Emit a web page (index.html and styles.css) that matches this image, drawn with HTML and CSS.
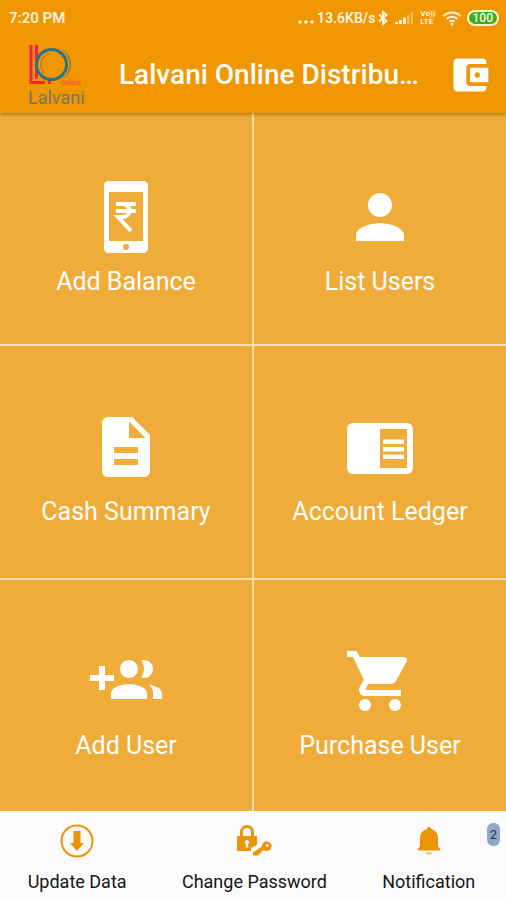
FILE: index.html
```html
<!DOCTYPE html>
<html lang="en">
<head>
<meta charset="utf-8">
<meta name="viewport" content="width=device-width, initial-scale=1">
<title>Lalvani Online Distributor</title>
<link rel="stylesheet" href="styles.css">
</head>
<body>
<div class="app">
  <header class="header">
    <div class="status">
      <span class="status-time">7:20 PM</span>
      <div class="status-info">
        <svg class="dots" viewBox="0 0 16 16" aria-hidden="true"><circle cx="2" cy="12" r="1.8"/><circle cx="8" cy="12" r="1.8"/><circle cx="14" cy="12" r="1.8"/></svg>
        <span>13.6KB/s</span>
        <svg class="bluetooth" viewBox="0 0 10 16" aria-hidden="true"><path d="M1 4.500l7.500 6.500L5 14V2l3.500 3L1 11.500"/></svg>
        <svg class="signal" viewBox="0 0 20 16" aria-hidden="true"><path d="M1 12h3v2H1zM5 10h3v4H5zM9 7.500h3V14H9z"/><path class="faint" d="M13 5h2.500v9H13zM17 2h2v12h-2z"/></svg>
        <span class="volte"><span>Vo))</span><span>LTE</span></span>
        <svg class="wifi" viewBox="0 0 20 16" aria-hidden="true"><path d="M1.500 6a12 12 0 0 1 17 0M4.500 9a7.800 7.800 0 0 1 11 0M7.300 11.800a3.900 3.900 0 0 1 5.400 0"/><circle cx="10" cy="14" r="1.500"/></svg>
        <span class="battery">100</span>
      </div>
    </div>
    <div class="bar">
      <svg class="logo" viewBox="0 0 60 62" role="img" aria-label="Lalvani Online">
        <path class="logo-red" d="M3 1v37.500h14M8.500 1v34M21.500 36v4"/>
        <circle class="logo-blue" cx="23.500" cy="20.500" r="15"/>
        <path class="logo-ring" d="M22 9.500a11.500 11.500 0 0 0-6 19M35 6a18 18 0 0 1 0 29M38 9a17 17 0 0 1 1 21"/>
        <text class="logo-small" x="33" y="41">Online</text>
        <text class="logo-name" x="0" y="60">Lalvani</text>
      </svg>
      <h1 class="title">Lalvani Online Distributor</h1>
      <button class="wallet" type="button" aria-label="Wallet">
        <svg viewBox="0 0 24 24" aria-hidden="true"><path d="M21 18v1c0 1.100-.9 2-2 2H5c-1.110 0-2-.9-2-2V5c0-1.100.89-2 2-2h14c1.100 0 2 .9 2 2v1h-9c-1.110 0-2 .9-2 2v8c0 1.100.89 2 2 2h9zm-9-2h10V8H12v8zm4-2.500c-.83 0-1.500-.67-1.500-1.500s.67-1.500 1.500-1.500 1.500.67 1.500 1.500-.67 1.500-1.500 1.500z"/></svg>
      </button>
    </div>
  </header>

  <main class="grid">
    <a class="tile" href="#balance">
      <svg viewBox="0 0 72 72" aria-hidden="true"><path fill-rule="evenodd" d="M19 0h34q5 0 5 5v62q0 5-5 5H19q-5 0-5-5V5q0-5 5-5zM19 11v49h34V11zM36 63a3 3 0 1 0 0 6 3 3 0 0 0 0-6z"/><path class="rupee" d="M26 23h20M26 30h20M26 23h6c10 0 10 13 0 13h-4l13 14"/></svg>
      <span>Add Balance</span>
    </a>
    <a class="tile" href="#users">
      <svg viewBox="0 0 24 24" aria-hidden="true"><path d="M12 12c2.210 0 4-1.790 4-4s-1.790-4-4-4-4 1.790-4 4 1.790 4 4 4zm0 2c-2.670 0-8 1.340-8 4v2h16v-2c0-2.660-5.330-4-8-4z"/></svg>
      <span>List Users</span>
    </a>
    <a class="tile" href="#cash">
      <svg viewBox="0 0 24 24" aria-hidden="true"><path d="M14 2H6c-1.100 0-1.990.9-1.990 2L4 20c0 1.100.89 2 1.990 2H18c1.100 0 2-.9 2-2V8l-6-6zm2 16H8v-2h8v2zm0-4H8v-2h8v2zm-3-5V3.500L18.500 9H13z"/></svg>
      <span>Cash Summary</span>
    </a>
    <a class="tile" href="#ledger">
      <svg viewBox="0 0 24 24" aria-hidden="true"><path d="M13 12h7v1.500h-7zm0-2.500h7V11h-7zm0 5h7V16h-7zM21 4H3c-1.100 0-2 .9-2 2v13c0 1.100.9 2 2 2h18c1.100 0 2-.9 2-2V6c0-1.100-.9-2-2-2zm0 15h-9V6h9v13z"/></svg>
      <span>Account Ledger</span>
    </a>
    <a class="tile" href="#add-user">
      <svg viewBox="0 0 24 24" aria-hidden="true"><path d="M8 10H5V7H3v3H0v2h3v3h2v-3h3v-2zm10 1c1.660 0 2.990-1.340 2.990-3S19.660 5 18 5c-.32 0-.63.05-.91.14.57.81.9 1.790.9 2.860s-.34 2.040-.9 2.860c.28.09.59.14.91.14zm-5 0c1.660 0 2.990-1.340 2.990-3S14.660 5 13 5s-3 1.340-3 3 1.340 3 3 3zm6.620 2.160c.83.73 1.380 1.660 1.380 2.840v2h3v-2c0-1.540-2.370-2.490-4.380-2.840zM13 13c-2 0-6 1-6 3v2h12v-2c0-2-4-3-6-3z"/></svg>
      <span>Add User</span>
    </a>
    <a class="tile" href="#purchase">
      <svg viewBox="0 0 24 24" aria-hidden="true"><path d="M7 18c-1.100 0-1.990.9-1.990 2S5.900 22 7 22s2-.9 2-2-.9-2-2-2zM1 2v2h2l3.600 7.590-1.350 2.450c-.16.28-.25.61-.25.96 0 1.100.9 2 2 2h12v-2H7.420c-.14 0-.25-.11-.25-.25l.03-.12.9-1.630h7.450c.75 0 1.410-.41 1.750-1.030l3.580-6.490c.08-.14.12-.31.12-.48 0-.55-.45-1-1-1H5.210l-.94-2H1zm16 16c-1.100 0-1.990.9-1.990 2s.89 2 1.990 2 2-.9 2-2-.9-2-2-2z"/></svg>
      <span>Purchase User</span>
    </a>
  </main>

  <nav class="nav">
    <a class="nav-item" href="#update">
      <svg viewBox="0 0 36 36" aria-hidden="true"><circle class="ring" cx="18" cy="18" r="15.500"/><path d="M14.500 8h7v12H25l-7 8-7-8h3.500z"/></svg>
      <span>Update Data</span>
    </a>
    <a class="nav-item" href="#password">
      <svg viewBox="0 0 36 36" aria-hidden="true"><path fill-rule="evenodd" d="M1 13h3V9a7 7 0 0 1 14 0v4h3v9l-6 3v3H1zM7 13h8V9a4 4 0 0 0-8 0zM11 17a2.200 2.200 0 0 0-1.200 4v3.500h2.400V21a2.200 2.200 0 0 0-1.200-4z"/><path fill-rule="evenodd" d="M26 23.500a4.800 4.800 0 1 1 3.500 4.300l-2.500-.3-2 1.500.3 1.500-2.300.3-.5 1.700H17v-3zM31.300 21.200a1.400 1.400 0 1 0 0 2.800 1.400 1.400 0 0 0 0-2.800z"/></svg>
      <span>Change Password</span>
    </a>
    <a class="nav-item" href="#notification">
      <svg viewBox="0 0 36 36" aria-hidden="true"><path d="M18 4c1.500 0 2 1 2 2 5 1.500 7 5 7 10v7l2 3v1.500H7V26l2-3v-7c0-5 2-8.500 7-10 0-1 .5-2 2-2z"/><path class="clapper" d="M15 29h6a3 3 0 0 1-6 0z"/></svg>
      <span>Notification</span>
    </a>
    <span class="badge">2</span>
  </nav>
</div>
</body>
</html>
```

FILE: styles.css
```css
* {
  box-sizing: border-box;
}

body {
  margin: 0;
  font-family: Roboto, "Liberation Sans", sans-serif;
  color: #fff;
  background: #fbfbfb;
}

a {
  color: inherit;
  text-decoration: none;
}

svg {
  display: block;
  flex: none;
  fill: currentColor;
}

.app {
  display: flex;
  flex-direction: column;
  min-height: 100vh;
}

.header {
  position: relative;
  background: #ef9600;
  box-shadow: 0 1px 4px rgba(90, 60, 0, 0.6);
}

.status {
  display: flex;
  align-items: center;
  justify-content: space-between;
  height: 36px;
  padding: 0 7px 0 9px;
  font-size: 14px;
  font-weight: 600;
  color: #fff4dc;
}

.status-time {
  font-size: 15px;
}

.status-info {
  display: flex;
  align-items: center;
  gap: 3px;
}

.dots {
  width: 16px;
  height: 16px;
}

.bluetooth {
  width: 10px;
  height: 16px;
  fill: none;
  stroke: currentColor;
  stroke-width: 2;
}

.signal {
  width: 20px;
  height: 16px;
  margin-left: 3px;
}

.faint {
  opacity: 0.4;
}

.volte {
  display: flex;
  flex-direction: column;
  margin: 0 3px;
  font-size: 8px;
  line-height: 8px;
  font-weight: 700;
}

.wifi {
  width: 20px;
  height: 16px;
}

.wifi path {
  fill: none;
  stroke: currentColor;
  stroke-width: 2;
}

.battery {
  margin-left: 2px;
  padding: 0 4px;
  border: 2px solid #fff0d0;
  border-radius: 8px;
  background: #38b020;
  font-size: 12px;
  line-height: 12px;
  font-weight: 500;
}

.bar {
  display: flex;
  align-items: center;
  height: 77px;
  padding: 0 14px 0 28px;
}

.logo {
  width: 60px;
  height: 62px;
}

.logo-red,
.logo-blue,
.logo-ring {
  fill: none;
}

.logo-red {
  stroke: #f5204f;
  stroke-width: 3;
}

.logo-blue {
  stroke: #287585;
  stroke-width: 3;
}

.logo-ring {
  stroke: #887a4d;
  stroke-width: 1;
}

.logo-small {
  fill: #fa5a3c;
  font-size: 7px;
  font-weight: 700;
}

.logo-name {
  fill: #75766a;
  font-size: 18px;
}

.title {
  flex: 1;
  min-width: 0;
  margin: 0 26px 0 31px;
  overflow: hidden;
  font-size: 28px;
  line-height: 36px;
  font-weight: 500;
  white-space: nowrap;
  text-overflow: ellipsis;
}

.wallet {
  padding: 0;
  border: 0;
  background: none;
  color: #fff;
}

.wallet svg {
  width: 44px;
  height: 44px;
}

.grid {
  flex: 1;
  display: grid;
  grid-template-columns: 1fr 1fr;
  grid-template-rows: repeat(3, 1fr);
  gap: 2px;
  background: #fbdfae;
}

.tile {
  display: flex;
  flex-direction: column;
  align-items: center;
  justify-content: center;
  gap: 14px;
  padding-top: 15px;
  background: #efac38;
  font-size: 25px;
  line-height: 30px;
}

.tile:nth-child(-n + 2) {
  padding-top: 20px;
}

.tile svg {
  width: 72px;
  height: 72px;
}

.rupee {
  fill: none;
  stroke: currentColor;
  stroke-width: 4;
}

.nav {
  position: relative;
  display: flex;
  justify-content: space-around;
  height: 89px;
  padding: 12px 3px 0 0;
  background: #fbfbfb;
  color: #151515;
}

.nav-item {
  display: flex;
  flex-direction: column;
  align-items: center;
  gap: 12px;
  font-size: 18px;
  line-height: 22px;
}

.nav-item svg {
  width: 36px;
  height: 36px;
  color: #ec9408;
}

.ring {
  fill: none;
  stroke: currentColor;
  stroke-width: 2;
}

.clapper {
  opacity: 0.5;
}

.badge {
  position: absolute;
  top: 12px;
  right: 6px;
  width: 13px;
  border-radius: 6px;
  background: #91a9c6;
  color: #27384c;
  font-size: 13px;
  line-height: 23px;
  text-align: center;
}
```
